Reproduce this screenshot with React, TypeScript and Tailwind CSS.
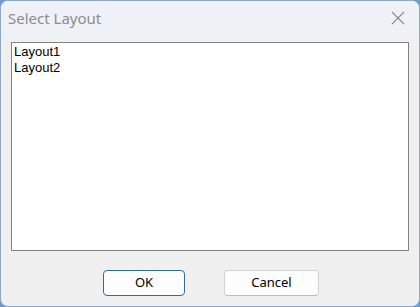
import React from "react";

export default function App() {
  return (
    <div className="w-[420px] h-[307px] bg-[#6f9ccc] overflow-hidden">
      <div className="w-[420px] h-[307px] rounded-[8px] border border-[#8fa9c4] bg-[#f0f0f0] flex flex-col overflow-hidden">
        <div className="h-[36px] bg-[#eef2f7] flex items-center justify-between pl-[7px] pr-[14px]" style={{ fontFamily: '"Noto Sans", "Open Sans", sans-serif' }}>
          <span className="text-[15px] text-[#8c8c8c] -mt-[1px]">Select Layout</span>
          <svg width="14" height="14" viewBox="0 0 14 14" className="-mt-[2px]">
            <path d="M1 1 L13 13 M13 1 L1 13" stroke="#8a8a8a" strokeWidth="1.1" fill="none" />
          </svg>
        </div>
        <div className="flex-1 flex flex-col px-[10px] pt-[5px]">
          <div className="h-[209px] bg-white border border-[#828282] px-[2px] pt-[1px]" style={{ fontFamily: '"Liberation Sans", Arial, sans-serif' }}>
            <div className="text-[13px] leading-[16px] text-black">Layout1</div>
            <div className="text-[13px] leading-[16px] text-black">Layout2</div>
          </div>
          <div className="flex justify-center gap-[39px] mt-[19px] pl-[2px]" style={{ fontFamily: '"Noto Sans", "Open Sans", sans-serif' }}>
            <div className="w-[82px] h-[26px] rounded-[4px] border border-[#2c6f95] bg-[#fdfdfd] flex items-center justify-center text-[13px] text-black">OK</div>
            <div className="w-[95px] h-[26px] rounded-[4px] border border-[#d3d3d3] border-b-[#bcbcbc] bg-[#fdfdfd] flex items-center justify-center text-[13px] text-black">Cancel</div>
          </div>
        </div>
      </div>
    </div>
  );
}
